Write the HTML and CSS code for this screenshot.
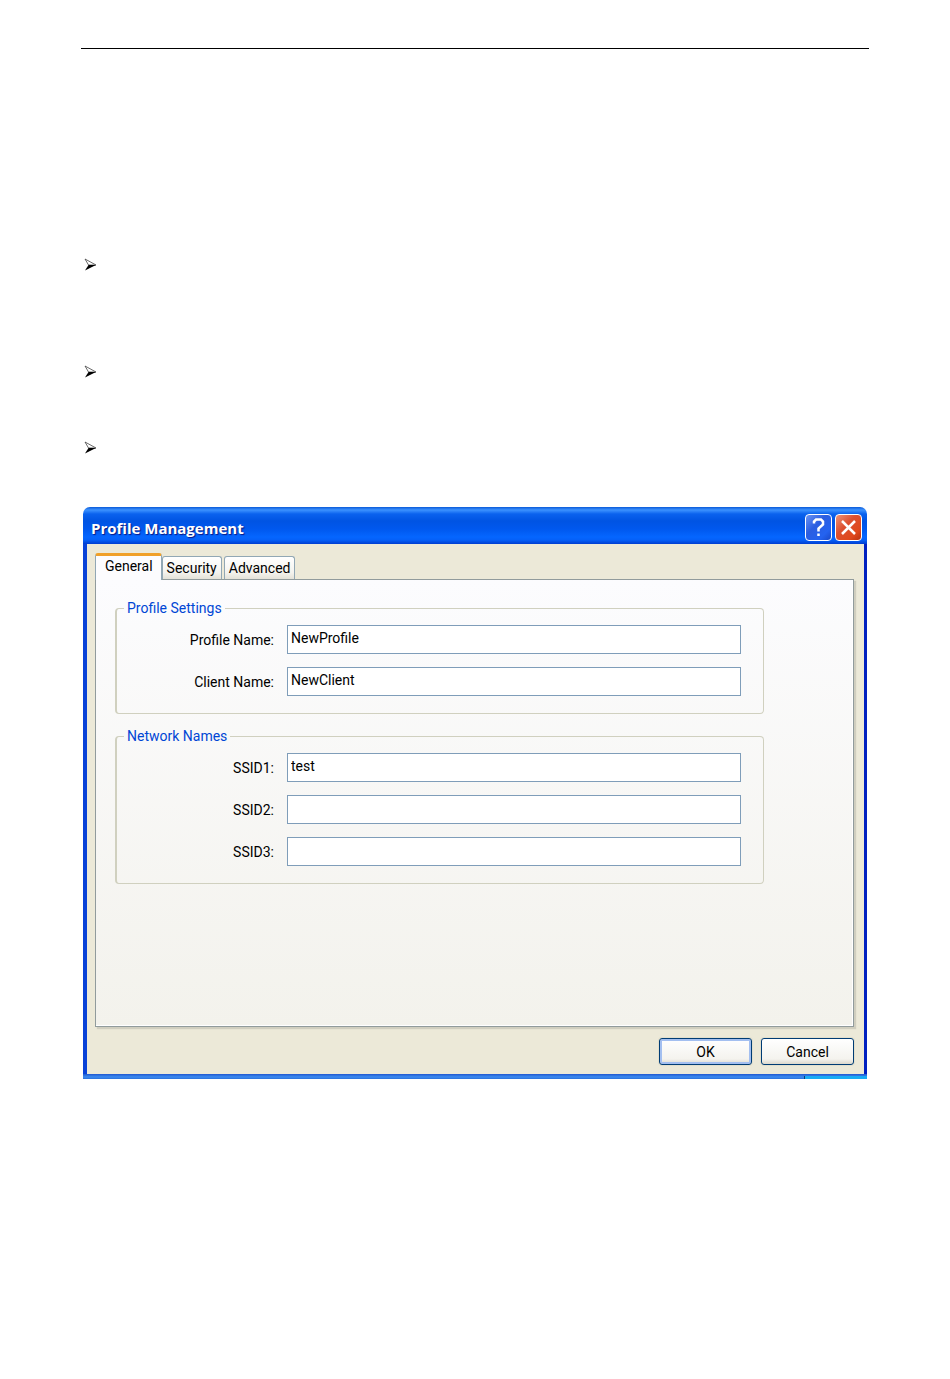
FILE: index.html
```html
<!DOCTYPE html>
<html lang="en">
<head>
    <meta charset="UTF-8">
    <meta name="viewport" content="width=device-width, initial-scale=1">
    <title>Profile Management</title>
    <link rel="stylesheet" href="styles.css">
</head>
<body>

<hr class="page-rule">

<ul class="steps">
    <li class="step step-long">
        <svg class="arrow" viewBox="0 0 13 13" aria-hidden="true"><path d="M1 1 L12 7 H4.5 Z" fill="#fff" stroke="#444" stroke-width=".8"/><path d="M4.500 7 H12 L1 12.500 Z" fill="#000"/></svg>
    </li>
    <li class="step">
        <svg class="arrow" viewBox="0 0 13 13" aria-hidden="true"><path d="M1 1 L12 7 H4.5 Z" fill="#fff" stroke="#444" stroke-width=".8"/><path d="M4.500 7 H12 L1 12.500 Z" fill="#000"/></svg>
    </li>
    <li class="step">
        <svg class="arrow" viewBox="0 0 13 13" aria-hidden="true"><path d="M1 1 L12 7 H4.5 Z" fill="#fff" stroke="#444" stroke-width=".8"/><path d="M4.500 7 H12 L1 12.500 Z" fill="#000"/></svg>
    </li>
</ul>

<form class="window">
    <div class="titlebar">
        <h1 class="title">Profile Management</h1>
        <button type="button" class="caption-btn help" aria-label="Help">
            <svg viewBox="0 0 25 25" aria-hidden="true"><path d="M8 8.500 V6.500 L10 4.500 H15 L17 6.500 V9.500 L12.500 13.500 V16.500 M12.500 18.500 V21" fill="none" stroke="#fff" stroke-width="2.500"/></svg>
        </button>
        <button type="button" class="caption-btn close" aria-label="Close">
            <svg viewBox="0 0 25 25" aria-hidden="true"><path d="M6 6 L19 19 M19 6 L6 19" fill="none" stroke="#fff" stroke-width="2.500"/></svg>
        </button>
    </div>

    <div class="client">
        <div class="tabs" role="tablist">
            <button type="button" class="tab active" role="tab" aria-selected="true">General</button>
            <button type="button" class="tab" role="tab" aria-selected="false">Security</button>
            <button type="button" class="tab" role="tab" aria-selected="false">Advanced</button>
        </div>

        <div class="panel" role="tabpanel">
            <fieldset class="group">
                <legend>Profile Settings</legend>
                <div class="fields">
                    <label for="profileName">Profile Name:</label>
                    <input type="text" id="profileName" value="NewProfile">
                    <label for="clientName">Client Name:</label>
                    <input type="text" id="clientName" value="NewClient">
                </div>
            </fieldset>

            <fieldset class="group">
                <legend>Network Names</legend>
                <div class="fields">
                    <label for="ssid1">SSID1:</label>
                    <input type="text" id="ssid1" value="test">
                    <label for="ssid2">SSID2:</label>
                    <input type="text" id="ssid2">
                    <label for="ssid3">SSID3:</label>
                    <input type="text" id="ssid3">
                </div>
            </fieldset>
        </div>

        <div class="actions">
            <button type="submit" class="btn default">OK</button>
            <button type="button" class="btn">Cancel</button>
        </div>
    </div>

    <div class="bottom-edge"><span class="edge-end"></span></div>
</form>

</body>
</html>
```
FILE: styles.css
```css
* {
    box-sizing: border-box;
}
body {
    margin: 0;
    padding: 48px 81px;
    background: #fff;
    color: #000;
    font-family: Roboto, "Liberation Sans", sans-serif;
    font-size: 14px;
}
button, input {
    font: inherit;
    color: inherit;
}
.page-rule {
    height: 1px;
    margin: 0;
    border: 0;
    background: #000;
}

/* bullet list above the window */
.steps {
    list-style: none;
    margin: 0;
    padding: 209px 0 0 3px;
}
.step {
    height: 76px;
}
.step-long {
    height: 107px;
}
.step:last-child {
    height: 66px;
}
.arrow {
    display: block;
    width: 13px;
    height: 13px;
}

/* window frame */
.window {
    margin: 0 2px;
}
.titlebar {
    display: flex;
    align-items: center;
    gap: 3px;
    height: 37px;
    padding: 4px 5px 0 8px;
    border-radius: 7px 7px 0 0;
    background: linear-gradient(#0a5ad8 0, #3c92ff 3px, #0a62ee 7px, #0054e3 14px, #0058ee 22px, #0566ff 30px, #0560f8 33px, #003dd0 37px);
}
.title {
    flex: 1;
    margin: 0;
    color: #fff;
    font-family: "Open Sans", "Noto Sans", sans-serif;
    font-size: 15px;
    font-weight: 700;
    text-shadow: 1px 1px 1px #0a1883;
}
.caption-btn {
    width: 27px;
    height: 27px;
    padding: 0;
    border: 1px solid #fff;
    border-radius: 4px;
}
.caption-btn svg {
    display: block;
    width: 25px;
    height: 25px;
}
.help {
    background: linear-gradient(135deg, #6a94f4, #2c5ee0 40%, #2463f0 75%, #1a48c8);
}
.close {
    background: linear-gradient(135deg, #ee9478, #dc5030 40%, #e0491c 75%, #b83210);
}
.client {
    padding: 9px 10px 9px 8px;
    border-left: 4px solid #0842d8;
    border-right: 3px solid #0020c0;
    background: #ece9d8;
}

/* tabs */
.tabs {
    display: flex;
    align-items: flex-end;
    height: 26px;
}
.tab {
    height: 23px;
    margin-right: 2px;
    padding: 0 4px;
    border: 1px solid #91a7b4;
    border-bottom: 0;
    border-radius: 3px 3px 0 0;
    background: linear-gradient(#fff, #f4f3ee 70%, #e4e2d8);
}
.tab.active {
    position: relative;
    height: 27px;
    margin: 0 0 -1px;
    padding: 0 8px 4px 9px;
    border-top: 3px solid #f5a623;
    border-top-color: #f0a028;
    background: #fcfcfe;
}
.panel {
    min-height: 448px;
    padding: 20px 89px 20px 19px;
    border: 1px solid #919b9c;
    background: linear-gradient(#fcfcfe, #f3f2ec);
    box-shadow: inset -1px -1px 0 #fff, 2px 2px 1px #d0cebf;
}

/* field groups */
.group {
    min-width: 0;
    margin: 0 0 14px;
    padding: 8px 22px 17px 0;
    border: 1px solid #d0d0bf;
    border-left-width: 2px;
    border-radius: 4px;
}
.group legend {
    margin-left: 7px;
    padding: 0 3px;
    color: #0046d5;
    line-height: 17px;
}
.fields {
    display: grid;
    grid-template-columns: 157px 1fr;
    gap: 13px;
    align-items: center;
}
.fields label {
    text-align: right;
}
.fields input {
    width: 100%;
    min-width: 0;
    height: 29px;
    padding: 0 4px 4px 3px;
    border: 1px solid #7f9db9;
    border-radius: 0;
    background: #fff;
    outline: none;
}

/* OK / Cancel */
.actions {
    display: flex;
    justify-content: flex-end;
    gap: 9px;
    margin-top: 11px;
}
.btn {
    width: 93px;
    height: 27px;
    padding: 0;
    border: 1px solid #003c74;
    border-radius: 3px;
    background: linear-gradient(#fff, #f4f3ee 80%, #dcd8cc);
    box-shadow: 0 0 0 1px #e2dfcd;
}
.btn.default {
    box-shadow: inset 0 0 0 2px #a3bff0, 0 0 0 1px #e2dfcd;
}

/* lower frame with the strip of desktop at the right */
.bottom-edge {
    display: flex;
    justify-content: flex-end;
    height: 5px;
    background: linear-gradient(#2058d0, #3c8cf0 60%, #2a70dc);
}
.edge-end {
    width: 63px;
    margin-top: 2px;
    border-left: 1px solid #0a3c78;
    background: #18acf4;
}
```
